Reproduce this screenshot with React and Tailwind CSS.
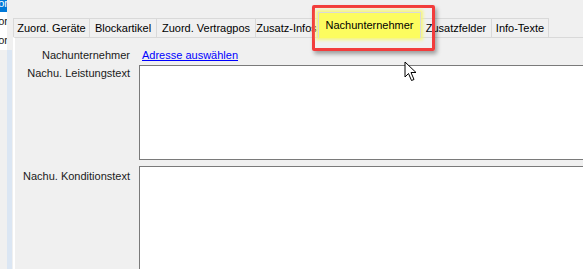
const tabs = [
  { label: "Zuord. Geräte", w: 77 },
  { label: "Blockartikel", w: 67 },
  { label: "Zuord. Vertragpos", w: 99 },
  { label: "Zusatz-Infos", w: 62 },
  { label: "Nachunternehmer", w: 103, active: true },
  { label: "Zusatzfelder", w: 71 },
  { label: "Info-Texte", w: 57 },
];

function Cursor() {
  return (
    <svg width="14" height="21" viewBox="0 0 14 21" className="absolute left-[404px] top-[61px]">
      <path
        d="M1 1 L1 16 L4.5 12.5 L7.5 19.5 L10 18.5 L7 11.5 L12 11.5 Z"
        fill="#fff"
        stroke="#000"
        strokeWidth="1"
        strokeLinejoin="round"
      />
    </svg>
  );
}

function Tab({ label, w, active }) {
  if (active) {
    return (
      <div
        style={{ width: w }}
        className="relative z-10 flex h-[26px] items-start justify-center border border-b-0 border-[#d9d9d9] bg-[#fcfc5f] pt-[6px] text-black shadow-[0_0_3px_2px_#f6f67a]"
      >
        {label}
      </div>
    );
  }
  return (
    <div
      style={{ width: w }}
      className="flex h-[20px] items-center justify-center border border-b-0 border-l-0 border-[#d9d9d9] bg-[#f0f0f0] text-black first:border-l"
    >
      {label}
    </div>
  );
}

export default function App() {
  return (
    <div className="relative flex h-[269px] w-[583px] overflow-hidden bg-[#f0f0f0] font-['Liberation_Sans',Arial,sans-serif] text-[11px] leading-[13px] text-[#1a1a1a]">
      {/* left list edge */}
      <div className="flex w-[13px] shrink-0">
        <div className="flex w-[7px] flex-col">
          <div className="-mt-[7px] flex h-[19px] items-end justify-end overflow-hidden bg-[#0078d7] pb-[2px] text-white">
            <span className="-mr-[1px]">or</span>
          </div>
          <div className="flex h-[19px] items-center justify-end overflow-hidden bg-white">
            <span className="-mr-[1px]">or</span>
          </div>
          <div className="flex h-[19px] items-center justify-end overflow-hidden bg-white">
            <span className="-mr-[1px]">or</span>
          </div>
        </div>
        <div className="mt-[50px] w-[5px] bg-[#dbe6f3]" />
        <div className="w-[1px]" />
      </div>

      {/* tab control */}
      <div className="flex min-w-0 flex-1 flex-col">
        <div className="flex h-[38px] items-end pt-[12px]">
          {tabs.map((t) => (
            <Tab key={t.label} {...t} />
          ))}
        </div>
        <div className="-mt-[1px] flex flex-1 flex-col border-l-2 border-t border-l-white border-t-[#d9d9d9] pt-[10px]">
          <div className="flex h-[14px] items-center">
            <div className="w-[115px] text-right">Nachunternehmer</div>
            <a href="#" className="ml-[12px] text-[#0000ff] underline">
              Adresse auswählen
            </a>
          </div>
          <div className="mt-[3px] flex">
            <div className="w-[115px] pt-[2px] text-right">Nachu. Leistungstext</div>
            <div className="ml-[9px] h-[95px] flex-1 border border-r-0 border-[#7a7a7a] bg-white" />
          </div>
          <div className="mt-[6px] flex flex-1">
            <div className="w-[115px] pt-[4px] text-right">Nachu. Konditionstext</div>
            <div className="ml-[9px] flex-1 border border-r-0 border-b-0 border-[#7a7a7a] bg-white" />
          </div>
        </div>
      </div>

      {/* annotation */}
      <div className="pointer-events-none absolute left-[312px] top-[5px] h-[46px] w-[123px] rounded-[2px] border-[3px] border-[#f23c3c] shadow-[2px_3px_4px_rgba(0,0,0,0.35)]" />
      <Cursor />
    </div>
  );
}
